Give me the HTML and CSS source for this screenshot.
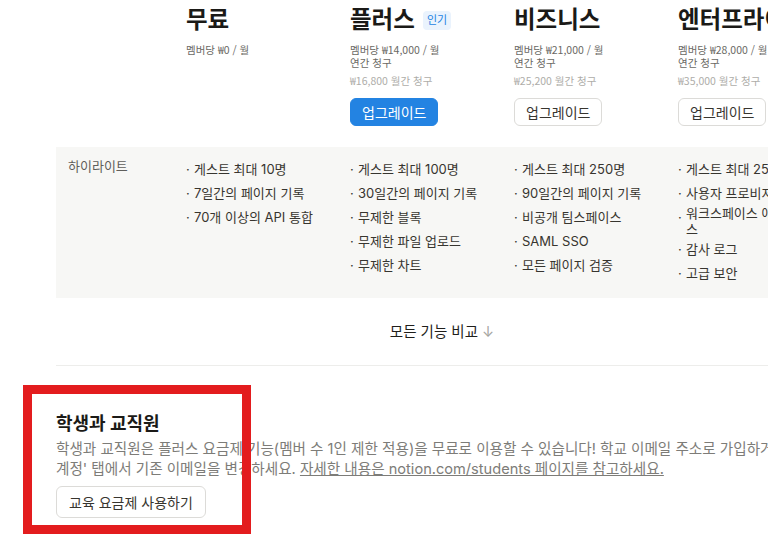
FILE: index.html
```html
<!DOCTYPE html>
<html lang="ko">

<head>
  <meta charset="UTF-8">
  <title>요금제</title>
  <link rel="stylesheet" href="styles.css">
</head>

<body>
  <div class="page">

    <div class="plans">
      <div></div>
      <div class="plan">
        <h2 class="plan-name">무료</h2>
        <div class="price">멤버당 ₩0 / 월</div>
      </div>
      <div class="plan">
        <h2 class="plan-name">플러스 <span class="badge">인기</span></h2>
        <div class="price">멤버당 ₩14,000 / 월<br>연간 청구</div>
        <div class="price-monthly">₩16,800 월간 청구</div>
        <button class="btn btn-primary">업그레이드</button>
      </div>
      <div class="plan">
        <h2 class="plan-name">비즈니스</h2>
        <div class="price">멤버당 ₩21,000 / 월<br>연간 청구</div>
        <div class="price-monthly">₩25,200 월간 청구</div>
        <button class="btn">업그레이드</button>
      </div>
      <div class="plan">
        <h2 class="plan-name">엔터프라이즈</h2>
        <div class="price">멤버당 ₩28,000 / 월<br>연간 청구</div>
        <div class="price-monthly">₩35,000 월간 청구</div>
        <button class="btn">업그레이드</button>
      </div>
    </div>

    <div class="highlights">
      <div class="label">하이라이트</div>
      <ul>
        <li><span class="dot">·</span><span>게스트 최대 10명</span></li>
        <li><span class="dot">·</span><span>7일간의 페이지 기록</span></li>
        <li><span class="dot">·</span><span>70개 이상의 API 통합</span></li>
      </ul>
      <ul>
        <li><span class="dot">·</span><span>게스트 최대 100명</span></li>
        <li><span class="dot">·</span><span>30일간의 페이지 기록</span></li>
        <li><span class="dot">·</span><span>무제한 블록</span></li>
        <li><span class="dot">·</span><span>무제한 파일 업로드</span></li>
        <li><span class="dot">·</span><span>무제한 차트</span></li>
      </ul>
      <ul>
        <li><span class="dot">·</span><span>게스트 최대 250명</span></li>
        <li><span class="dot">·</span><span>90일간의 페이지 기록</span></li>
        <li><span class="dot">·</span><span>비공개 팀스페이스</span></li>
        <li><span class="dot">·</span><span>SAML SSO</span></li>
        <li><span class="dot">·</span><span>모든 페이지 검증</span></li>
      </ul>
      <ul>
        <li><span class="dot">·</span><span>게스트 최대 250명</span></li>
        <li><span class="dot">·</span><span>사용자 프로비저닝</span></li>
        <li><span class="dot">·</span><span>워크스페이스 애널리틱스</span></li>
        <li><span class="dot">·</span><span>감사 로그</span></li>
        <li><span class="dot">·</span><span>고급 보안</span></li>
      </ul>
    </div>

    <div class="compare">모든 기능 비교 <span class="arrow">↓</span></div>

    <hr class="divider">

    <div class="students">
      <h3>학생과 교직원</h3>
      <p>학생과 교직원은 플러스 요금제 기능(멤버 수 1인 제한 적용)을 무료로 이용할 수 있습니다! 학교 이메일 주소로 가입하거나 '설정' &gt; '내<br>계정' 탭에서 기존 이메일을 변경하세요. <a href="#">자세한 내용은 notion.com/students 페이지를 참고하세요.</a></p>
      <button class="btn btn-edu">교육 요금제 사용하기</button>
    </div>

  </div>

  <div class="mark"></div>
</body>

</html>
```

FILE: styles.css
```css
body {
  margin: 0;
  overflow: hidden;
  background: #fff;
  color: #37352f;
  font-family: Inter, "Noto Sans CJK KR", sans-serif;
}

.page {
  width: 1100px;
}

.plans {
  display: grid;
  grid-template-columns: 130px repeat(4, 164px);
  padding-left: 56px;
}

.plan {
  padding-top: 6px;
}

.plan-name {
  display: flex;
  align-items: center;
  gap: 8px;
  margin: 0;
  font-size: 23.5px;
  line-height: 28px;
  font-weight: 700;
  color: #1b1a17;
  white-space: nowrap;
}

.badge {
  padding: 0 4px;
  border-radius: 4px;
  background-color: #eaf3fd;
  color: #2383e2;
  font-size: 11px;
  line-height: 19px;
  font-weight: 400;
}

.price {
  margin-top: 9px;
  font-family: "Noto Sans CJK KR", sans-serif;
  font-size: 10.5px;
  line-height: 13px;
  color: #6a6964;
}

.price-monthly {
  margin-top: 5px;
  font-family: "Noto Sans CJK KR", sans-serif;
  font-size: 10.5px;
  line-height: 13px;
  color: #aeada9;
}

.btn {
  display: block;
  height: 28px;
  margin-top: 11px;
  padding: 0 11px;
  border: 1px solid #dcdbd8;
  border-radius: 6px;
  background: #fff;
  color: #37352f;
  font-family: inherit;
  font-size: 14px;
  cursor: pointer;
}

.btn-primary {
  border-color: #2383e2;
  background-color: #2383e2;
  color: #fff;
}

.highlights {
  display: grid;
  grid-template-columns: 130px repeat(4, 164px);
  margin: 21px 0 0 56px;
  padding: 10px 0 13px;
  background-color: #f7f7f5;
}

.label {
  padding-left: 12px;
  font-size: 13px;
  line-height: 19px;
  color: #5f5e5a;
}

.highlights ul {
  margin: 0;
  padding: 0;
  list-style: none;
}

.highlights li {
  display: flex;
  align-items: center;
  min-height: 24px;
  padding-right: 28px;
  font-size: 13px;
  line-height: 16px;
}

.dot {
  flex: none;
  width: 8px;
  align-self: flex-start;
  margin-top: 4px;
}

.compare {
  width: 772px;
  margin-left: 56px;
  padding: 24px 0 23px;
  text-align: center;
  font-size: 14.5px;
  line-height: 20px;
  color: #1f1e1b;
}

.arrow {
  color: #a5a4a0;
}

.divider {
  margin: 0 0 0 56px;
  border: none;
  border-top: 1px solid #ededeb;
}

.students {
  padding: 47px 0 0 56px;
}

.students h3 {
  margin: 0;
  font-size: 18px;
  line-height: 22px;
  font-weight: 700;
  color: #1b1a17;
}

.students p {
  margin: 4px 0 0;
  font-size: 14.6px;
  line-height: 20px;
  color: #7d7c78;
  white-space: nowrap;
}

.students a {
  color: #7d7c78;
}

.btn-edu {
  height: 32px;
  margin-top: 7px;
  padding: 0 12px;
}

.mark {
  position: absolute;
  left: 23px;
  top: 385px;
  width: 228px;
  height: 149px;
  box-sizing: border-box;
  border: 9px solid #e31c1e;
  pointer-events: none;
}
```
